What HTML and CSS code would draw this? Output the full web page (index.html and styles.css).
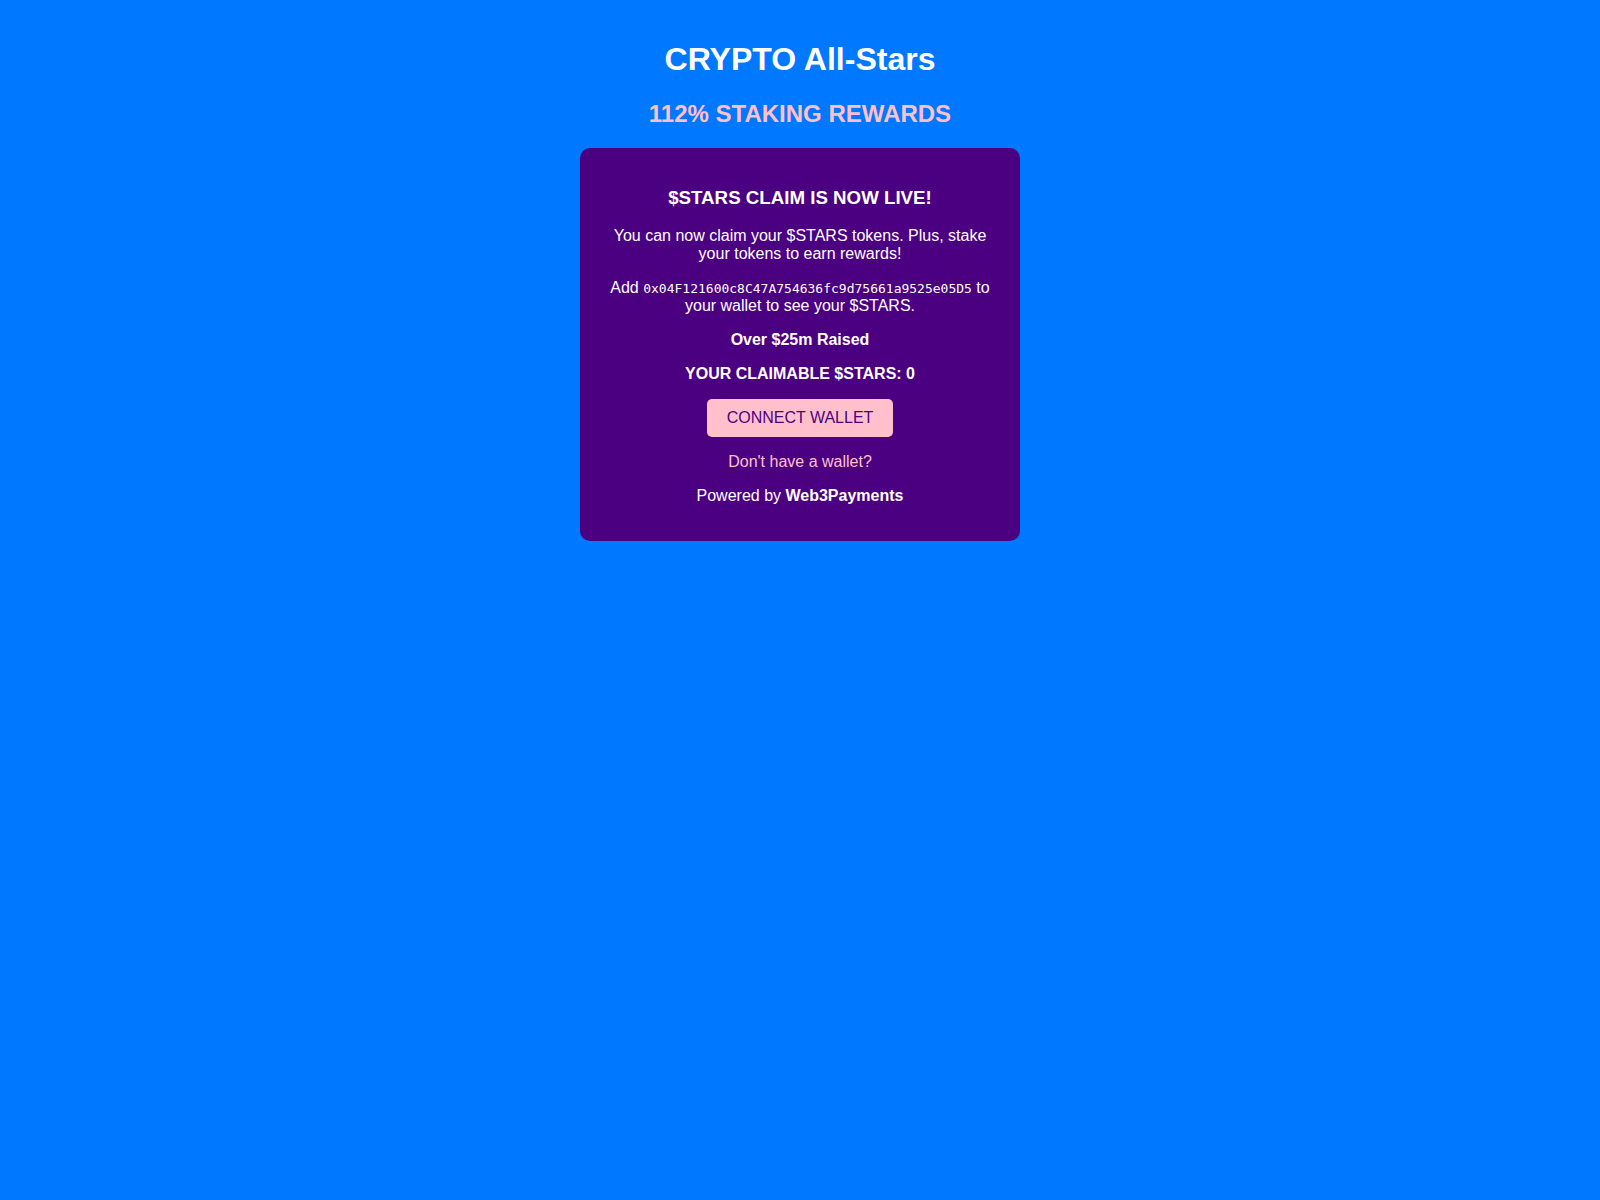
FILE: index.html
```html
<!DOCTYPE html>
<html lang="en">
<head>
  <meta charset="UTF-8">
  <meta name="viewport" content="width=device-width, initial-scale=1.0">
  <title>CRYPTO All-Stars</title>
  <link rel="stylesheet" href="styles.css">
</head>
<body>
  <div class="container">
    <h1>CRYPTO All-Stars</h1>
    <h2>112% STAKING REWARDS</h2>

    <div class="claim-box">
      <h3>$STARS CLAIM IS NOW LIVE!</h3>
      <p>You can now claim your $STARS tokens. Plus, stake your tokens to earn rewards!</p>
      <p>Add <code>0x04F121600c8C47A754636fc9d75661a9525e05D5</code> to your wallet to see your $STARS.</p>
      <p><strong>Over $25m Raised</strong></p>
      <p><strong>YOUR CLAIMABLE $STARS: 0</strong></p>
      <button type="button" class="connect-wallet">CONNECT WALLET</button>
      <p><a href="#" class="wallet-link">Don't have a wallet?</a></p>
      <p>Powered by <strong>Web3Payments</strong></p>
    </div>
  </div>
</body>
</html>
```
FILE: styles.css
```css
body {
  font-family: Arial, "Liberation Sans", sans-serif;
  background-color: #0078ff;
  color: white;
  text-align: center;
  margin: 0;
  padding: 0;
}

.container {
  padding: 20px;
}

h2 {
  color: pink;
}

.claim-box {
  background-color: indigo;
  max-width: 400px;
  margin: 20px auto;
  padding: 20px;
  border-radius: 10px;
}

code {
  font-family: "DejaVu Sans Mono", monospace;
  font-size: 13px;
}

.connect-wallet {
  background-color: pink;
  color: indigo;
  border: none;
  border-radius: 5px;
  padding: 10px 20px;
  font-family: inherit;
  font-size: 16px;
  cursor: pointer;
}

.wallet-link {
  color: pink;
  text-decoration: none;
}
```
